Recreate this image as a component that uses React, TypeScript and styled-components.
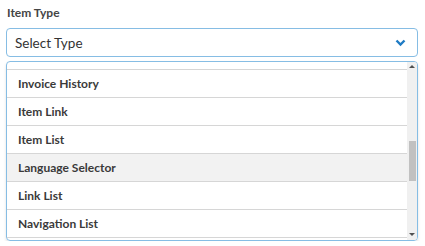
import * as React from "react";
import styled, { createGlobalStyle } from "styled-components";

const GlobalStyle = createGlobalStyle`
	body {
		margin: 0;
		background: #ffffff;
		font-family: Lato, "Liberation Sans", sans-serif;
	}
`;

// CSS
interface RowProps {
	active?: boolean;
}

const Field = styled.div`
	display: flex;
	flex-direction: column;
	padding: 6px 7px 0 6px;
	width: 412px;
`;

const Label = styled.label`
	font-size: 12px;
	font-weight: 700;
	color: #454545;
	padding-left: 1px;
	height: 22px;
	line-height: 13px;
`;

const SelectBox = styled.div`
	display: flex;
	align-items: center;
	justify-content: space-between;
	height: 27px;
	border: 1px solid #86bde4;
	border-radius: 4px;
	padding: 0 11px 0 8px;
	font-size: 13.5px;
	color: #333333;
	margin-bottom: 4px;
`;

const Menu = styled.div`
	display: flex;
	height: 178px;
	border: 1px solid #86bde4;
	border-radius: 4px;
	box-shadow: 0 2px 3px rgba(0, 0, 0, 0.12);
	overflow: hidden;
`;

const Viewport = styled.div`
	flex: 1;
	overflow: hidden;
	padding-top: 7px;
`;

const List = styled.ul`
	list-style: none;
	margin: 0;
	padding: 0;
	border-top: 1px solid #d6d6d6;
`;

const Row = styled.li<RowProps>`
	display: flex;
	align-items: center;
	height: 27px;
	border-bottom: 1px solid #d6d6d6;
	padding-left: 11px;
	font-size: 12px;
	font-weight: 700;
	color: #3a3a3a;
	background: ${(p) => (p.active ? "#f2f2f2" : "#ffffff")};
`;

const ScrollTrack = styled.div`
	display: flex;
	flex-direction: column;
	align-items: center;
	width: 10px;
	background: #f0f0f0;
`;

const ArrowUp = styled.div`
	margin-top: 3px;
	width: 0;
	height: 0;
	border-left: 3px solid transparent;
	border-right: 3px solid transparent;
	border-bottom: 3px solid #505050;
`;

const ArrowDown = styled.div`
	margin-bottom: 4px;
	width: 0;
	height: 0;
	border-left: 3px solid transparent;
	border-right: 3px solid transparent;
	border-top: 3px solid #505050;
`;

const TrackBody = styled.div`
	flex: 1;
	display: flex;
	flex-direction: column;
	width: 100%;
	align-items: center;
	padding-top: 73px;
`;

const Thumb = styled.div`
	width: 7px;
	height: 40px;
	background: #c1c1c1;
`;

const items = [
	"Invoice History",
	"Item Link",
	"Item List",
	"Language Selector",
	"Link List",
	"Navigation List",
];

const Chevron: React.FC = () => (
	<svg width="11" height="8" viewBox="0 0 11 8">
		<path
			d="M1.5 1.5 L5.5 5.5 L9.5 1.5"
			fill="none"
			stroke="#1f7bc4"
			strokeWidth="2.4"
		/>
	</svg>
);

export default function App() {
	return (
		<>
			<GlobalStyle />
			<Field>
				<Label>Item Type</Label>
				<SelectBox>
					<span>Select Type</span>
					<Chevron />
				</SelectBox>
				<Menu>
					<Viewport>
						<List>
							{items.map((item) => (
								<Row key={item} active={item === "Language Selector"}>
									{item}
								</Row>
							))}
						</List>
					</Viewport>
					<ScrollTrack>
						<ArrowUp />
						<TrackBody>
							<Thumb />
						</TrackBody>
						<ArrowDown />
					</ScrollTrack>
				</Menu>
			</Field>
		</>
	);
}
